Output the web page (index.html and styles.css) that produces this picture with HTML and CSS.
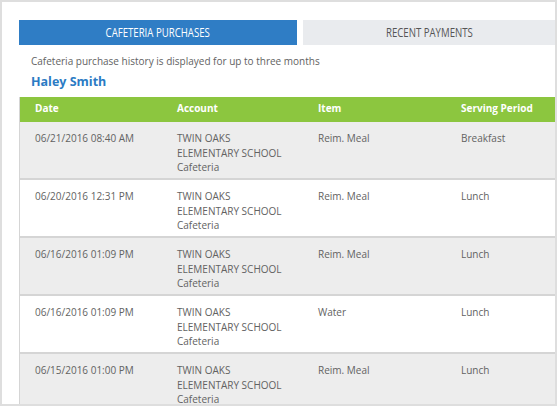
FILE: index.html
```html
<!DOCTYPE html>
<html lang="en">
<head>
    <meta charset="UTF-8">
    <meta name="viewport" content="width=device-width, initial-scale=1.0">
    <title>Cafeteria Purchases</title>
    <link rel="stylesheet" href="styles.css">
</head>
<body>
    <div class="frame">
        <div class="tabs">
            <div class="tab active"><span>CAFETERIA PURCHASES</span></div>
            <div class="tab"><span>RECENT PAYMENTS</span></div>
        </div>

        <p class="note">Cafeteria purchase history is displayed for up to three months</p>
        <h2 class="student">Haley Smith</h2>

        <div class="table">
            <div class="row head">
                <div>Date</div>
                <div>Account</div>
                <div>Item</div>
                <div>Serving Period</div>
            </div>
            <div class="row odd">
                <div>06/21/2016 08:40 AM</div>
                <div>TWIN OAKS<br>ELEMENTARY SCHOOL<br>Cafeteria</div>
                <div>Reim. Meal</div>
                <div>Breakfast</div>
            </div>
            <div class="row">
                <div>06/20/2016 12:31 PM</div>
                <div>TWIN OAKS<br>ELEMENTARY SCHOOL<br>Cafeteria</div>
                <div>Reim. Meal</div>
                <div>Lunch</div>
            </div>
            <div class="row odd">
                <div>06/16/2016 01:09 PM</div>
                <div>TWIN OAKS<br>ELEMENTARY SCHOOL<br>Cafeteria</div>
                <div>Reim. Meal</div>
                <div>Lunch</div>
            </div>
            <div class="row">
                <div>06/16/2016 01:09 PM</div>
                <div>TWIN OAKS<br>ELEMENTARY SCHOOL<br>Cafeteria</div>
                <div>Water</div>
                <div>Lunch</div>
            </div>
            <div class="row odd">
                <div>06/15/2016 01:00 PM</div>
                <div>TWIN OAKS<br>ELEMENTARY SCHOOL<br>Cafeteria</div>
                <div>Reim. Meal</div>
                <div>Lunch</div>
            </div>
        </div>
    </div>
</body>
</html>
```

FILE: styles.css
```css
body {
    margin: 0;
    background-color: #fff;
    font-family: "Open Sans", Arial, sans-serif;
    color: #626262;
}

.frame {
    box-sizing: border-box;
    width: 557px;
    height: 406px;
    border: 2px solid #dedede;
    padding: 18px 0 0 17px;
    overflow: hidden;
}

.tabs {
    display: flex;
    gap: 6px;
}

.tab {
    height: 25px;
    line-height: 25px;
    text-align: center;
    font-size: 12.5px;
    background-color: #e9ebee;
    color: #555;
    width: 252px;
}

/* the tab labels use a condensed face */
.tab span {
    display: inline-block;
    transform: scaleX(0.77);
}

.tab.active {
    width: 278px;
    background-color: #2f7dc5;
    color: #fff;
}

.note {
    margin: 8px 0 0 12px;
    font-size: 10px;
    line-height: 16px;
}

.student {
    margin: 4px 0 0 12px;
    font-size: 12.5px;
    line-height: 18px;
    font-weight: bold;
    color: #2b7bc4;
}

.table {
    margin-top: 6px;
    border-left: 1px solid #d5d5d5;
}

.row {
    display: grid;
    grid-template-columns: 142px 141px 143px 1fr;
    box-sizing: border-box;
    height: 58px;
    padding-top: 9px;
    border-bottom: 2px solid #d5d5d5;
    font-size: 10px;
    line-height: 14.5px;
}

.row > div {
    padding-left: 15px;
}

.row.odd {
    background-color: #ededed;
}

.row.head {
    height: 25px;
    padding-top: 0;
    border-bottom: 0;
    line-height: 23px;
    background-color: #8cc63f;
    color: #fff;
    font-size: 10px;
    font-weight: bold;
}
```
